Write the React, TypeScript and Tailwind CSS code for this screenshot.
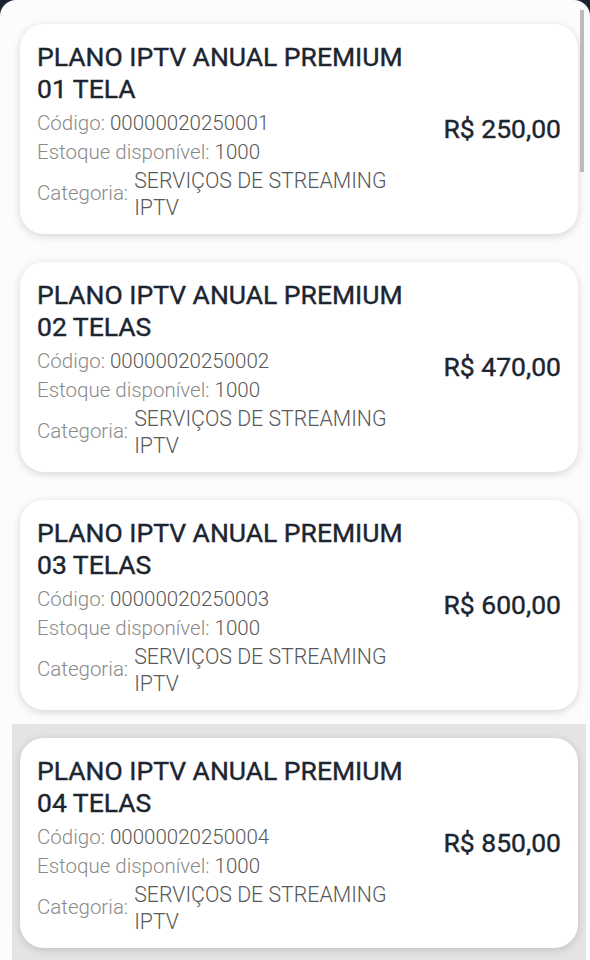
import React from 'react';

interface Plano {
  titulo: string;
  codigo: string;
  estoque: number;
  categoria: string;
  preco: string;
}

const planos: Plano[] = [
  { titulo: 'PLANO IPTV ANUAL PREMIUM 01 TELA', codigo: '00000020250001', estoque: 1000, categoria: 'SERVIÇOS DE STREAMING IPTV', preco: 'R$ 250,00' },
  { titulo: 'PLANO IPTV ANUAL PREMIUM 02 TELAS', codigo: '00000020250002', estoque: 1000, categoria: 'SERVIÇOS DE STREAMING IPTV', preco: 'R$ 470,00' },
  { titulo: 'PLANO IPTV ANUAL PREMIUM 03 TELAS', codigo: '00000020250003', estoque: 1000, categoria: 'SERVIÇOS DE STREAMING IPTV', preco: 'R$ 600,00' },
  { titulo: 'PLANO IPTV ANUAL PREMIUM 04 TELAS', codigo: '00000020250004', estoque: 1000, categoria: 'SERVIÇOS DE STREAMING IPTV', preco: 'R$ 850,00' },
];

function PlanoCard({ plano, ativo }: { plano: Plano; ativo?: boolean }) {
  return (
    <div className={`px-2 py-[14px] ${ativo ? 'bg-[#e4e4e4]' : ''}`}>
      <div className="flex h-[210px] items-center rounded-[24px] bg-white pl-[17px] pr-[17px] shadow-[0_2px_9px_rgba(0,0,0,0.16)]">
        <div className="w-[385px] pt-[3px]">
          <h3 className="text-[26.5px] font-normal leading-[32px] text-[#1c2530] [-webkit-text-stroke:0.4px_#1c2530]">{plano.titulo}</h3>
          <div className="mt-1 text-[20.5px] font-light leading-[29px] text-[#8a8a8a]">
            Código: <span className="text-[#585858]">{plano.codigo}</span>
          </div>
          <div className="text-[20.5px] font-light leading-[29px] text-[#8a8a8a]">
            Estoque disponível: <span className="text-[#585858]">{plano.estoque}</span>
          </div>
          <div className="flex items-center gap-[6px]">
            <span className="text-[20.5px] font-light leading-[29px] text-[#8a8a8a]">Categoria:</span>
            <span className="w-[270px] text-[21.3px] font-light leading-[27px] text-[#585858]">{plano.categoria}</span>
          </div>
        </div>
        <div className="ml-auto text-[26.5px] font-normal text-[#1c2530] [-webkit-text-stroke:0.4px_#1c2530]">{plano.preco}</div>
      </div>
    </div>
  );
}

export default function App() {
  return (
    <div className="h-[960px] w-[590px] overflow-hidden bg-[#1b2330] font-['Roboto',sans-serif]">
      <div className="relative h-full rounded-t-[16px] bg-[#fcfcfc] pt-[10px] pl-[12px] pr-[4px]">
        {/* scrollbar */}
        <div className="absolute right-[6px] top-[10px] h-[162px] w-[4px] bg-[#bcbcbc]" />
        {planos.map((p, i) => (
          <PlanoCard key={p.codigo} plano={p} ativo={i === 3} />
        ))}
      </div>
    </div>
  );
}
